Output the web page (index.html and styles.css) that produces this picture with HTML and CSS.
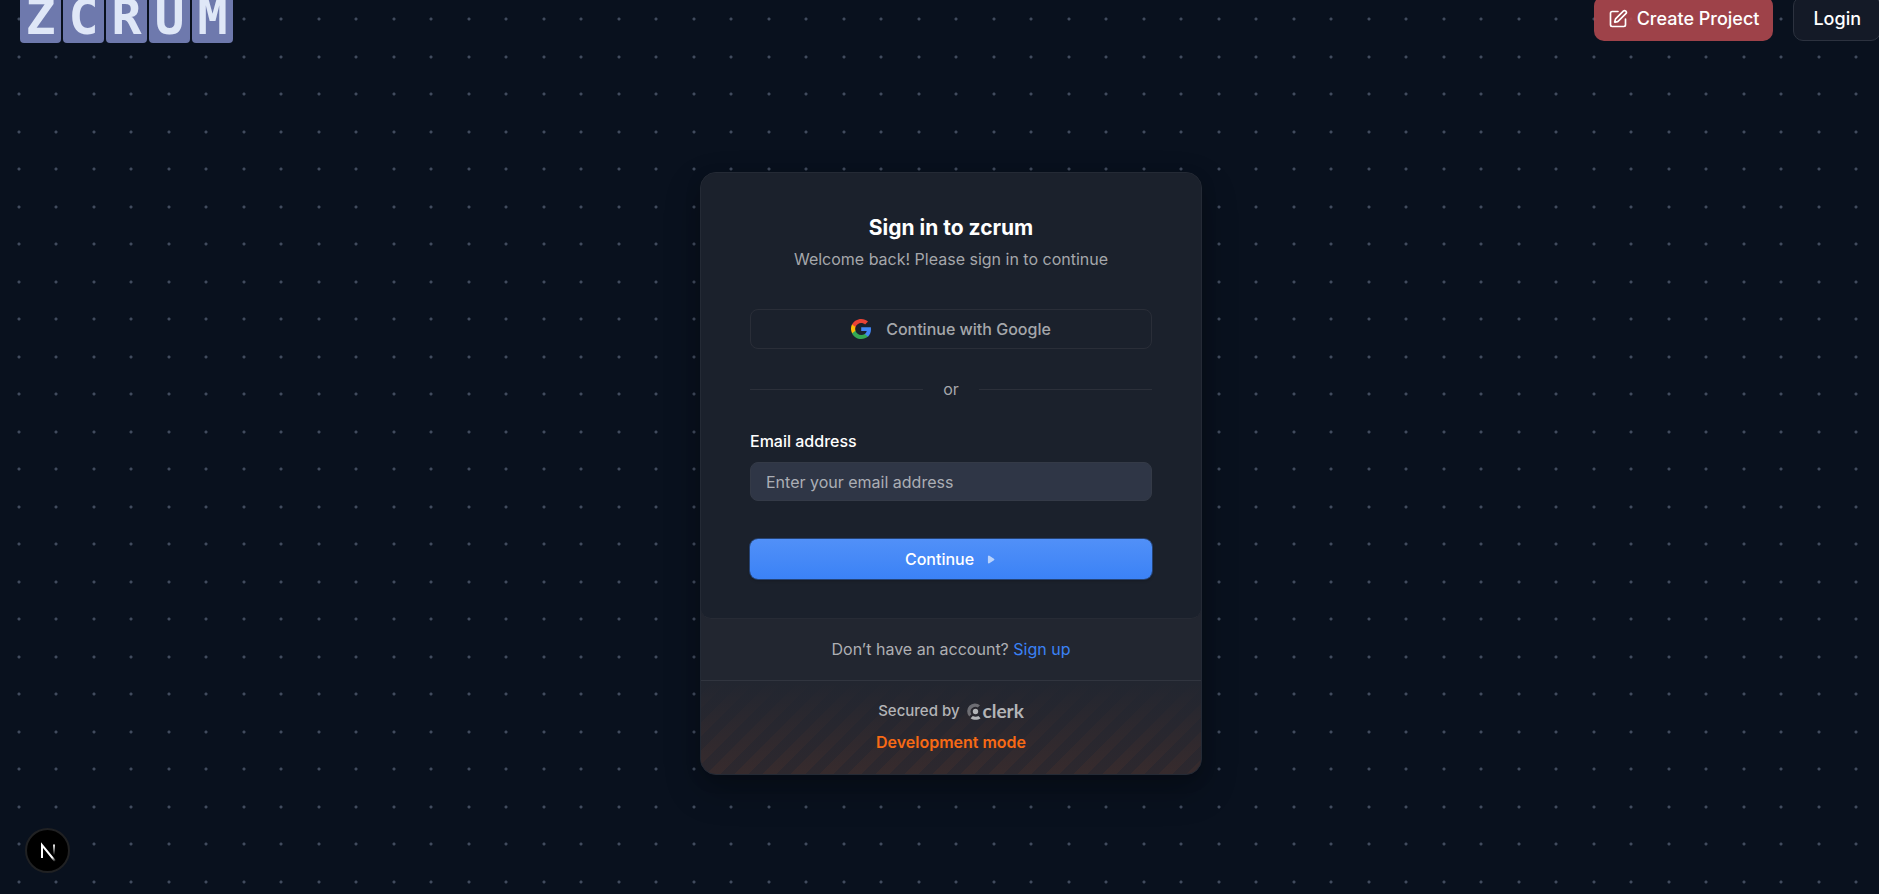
FILE: index.html
```html
<!DOCTYPE html>
<html lang="en">
<head>
<meta charset="utf-8">
<title>zcrum</title>
<link rel="stylesheet" href="styles.css">
</head>
<body>
<header class="header">
  <a class="logo" href="#" aria-label="zcrum home">
    <span class="tile">Z</span><span class="tile">C</span><span class="tile">R</span><span class="tile">U</span><span class="tile">M</span>
  </a>
  <nav class="actions">
    <button class="btn btn-create" type="button">
      <svg width="20" height="20" viewBox="0 0 24 24" fill="none" stroke="currentColor" stroke-width="2" stroke-linecap="round" stroke-linejoin="round" aria-hidden="true"><path d="M12 3H5a2 2 0 0 0-2 2v14a2 2 0 0 0 2 2h14a2 2 0 0 0 2-2v-7"/><path d="M18.375 2.625a1 1 0 0 1 3 3l-9.013 9.014a2 2 0 0 1-.853.505l-2.873.84a.5.5 0 0 1-.62-.62l.84-2.873a2 2 0 0 1 .506-.852z"/></svg>
      <span>Create Project</span>
    </button>
    <button class="btn btn-login" type="button">Login</button>
  </nav>
</header>
<main class="main">
  <section class="card">
    <div class="panel">
      <div class="heading">
        <h1 class="title">Sign in to zcrum</h1>
        <p class="subtitle">Welcome back! Please sign in to continue</p>
      </div>
      <button class="google" type="button">
        <svg width="20" height="20" viewBox="0 0 48 48" aria-hidden="true"><path fill="#4285F4" d="M48 24.500c0-1.700-.2-3.300-.4-4.900H24.500v9.300h13.200c-.6 3-2.300 5.600-4.900 7.300v6.100h7.900C45.300 38.100 48 31.900 48 24.500z"/><path fill="#34A853" d="M24.500 48c6.600 0 12.100-2.200 16.200-5.900l-7.900-6.100c-2.200 1.500-5 2.300-8.300 2.300-6.400 0-11.800-4.300-13.700-10.100H2.600v6.300C6.700 42.600 14.900 48 24.500 48z"/><path fill="#FBBC05" d="M10.800 28.200a14.400 14.400 0 0 1 0-9.200v-6.300H2.600a24 24 0 0 0 0 21.500z"/><path fill="#EA4335" d="M24.500 9.500c3.600 0 6.800 1.200 9.300 3.600l7-7C36.600 2.300 31.100 0 24.500 0 14.900 0 6.700 5.500 2.600 13l8.200 6.300c1.900-5.700 7.300-9.800 13.700-9.800z"/></svg>
        <span>Continue with Google</span>
      </button>
      <div class="divider"><span>or</span></div>
      <form class="form">
        <label class="label" for="email">Email address</label>
        <input class="input" id="email" type="email" placeholder="Enter your email address">
        <button class="continue" type="button">
          <span>Continue</span>
          <svg width="13" height="13" viewBox="0 0 10 10" aria-hidden="true"><path fill="currentColor" stroke="currentColor" stroke-width="1.500" stroke-linecap="round" stroke-linejoin="round" d="m7.250 5-3.500-2.250v4.500L7.250 5Z"/></svg>
        </button>
      </form>
    </div>
    <footer class="footer">
      <p class="signup">Don’t have an account? <a href="#">Sign up</a></p>
      <div class="secured">
        <p class="secured-row"><span>Secured by</span>
          <span class="clerk">
            <svg width="14" height="17" viewBox="0 0 14 17" aria-hidden="true"><path d="M13 2.200A7.800 7.800 0 0 0 2.200 13.400L4.400 11.200A4.700 4.700 0 0 1 10.800 4.600z" fill="currentColor" opacity=".5"/><circle cx="8.500" cy="8.500" r="2.700" fill="currentColor"/><path d="M3.600 15.200l2.200-2.200c1.700 1.100 3.900 1.100 5.600 0l2.200 2.200c-2.900 2.200-7.100 2.200-10 0z" fill="currentColor"/></svg>
            <span class="clerk-name">clerk</span>
          </span>
        </p>
        <p class="devmode">Development mode</p>
      </div>
    </footer>
  </section>
</main>
<button class="devtools" type="button" aria-label="Open Next.js dev tools">
  <svg width="40" height="40" viewBox="0 0 40 40" fill="none" aria-hidden="true"><defs><linearGradient id="diag" x1="20" y1="20" x2="28" y2="30" gradientUnits="userSpaceOnUse"><stop stop-color="#fff"/><stop offset=".6" stop-color="#fff"/><stop offset="1" stop-color="#fff" stop-opacity="0"/></linearGradient><linearGradient id="stem" x1="26" y1="13" x2="26" y2="24" gradientUnits="userSpaceOnUse"><stop stop-color="#fff"/><stop offset="1" stop-color="#fff" stop-opacity="0"/></linearGradient></defs><path d="M14 27V14L27 30" stroke="url(#diag)" stroke-width="2"/><path d="M26 13.500V24" stroke="url(#stem)" stroke-width="2"/></svg>
</button>
</body>
</html>
```
FILE: styles.css
```css
* { box-sizing: border-box; }
body {
  margin: 0;
  min-height: 100vh;
  overflow: hidden;
  font-family: Inter, "Liberation Sans", sans-serif;
  font-size: 16px;
  line-height: 22px;
  color: #fff;
  background-color: #09111e;
  background-image:
    radial-gradient(circle at 19px 19px, #414b5e 1px, transparent 2px),
    radial-gradient(circle at 56px 19px, #414b5e 1px, transparent 2px),
    radial-gradient(circle at 19px 57px, #414b5e 1px, transparent 2px),
    radial-gradient(circle at 56px 57px, #414b5e 1px, transparent 2px);
  background-size: 75px 75px;
}
h1, p { margin: 0; }
button, input { font: inherit; color: inherit; }
.header {
  display: flex;
  justify-content: space-between;
  align-items: flex-end;
  height: 43px;
  padding-left: 20px;
  margin-right: -2px;
}
.logo { display: flex; gap: 2px; text-decoration: none; }
.tile {
  display: flex;
  justify-content: center;
  width: 41px;
  height: 52px;
  border-radius: 4px;
  background: #6e79ad;
  color: #dfe7f7;
  font: bold 50px/52px "DejaVu Sans Mono", monospace;
}
.actions { display: flex; gap: 20px; padding-bottom: 2px; }
.btn {
  display: flex;
  align-items: center;
  height: 45px;
  border-radius: 10px;
  font-size: 18px;
  font-weight: 500;
}
.btn-create { gap: 9px; padding: 0 14px; border: 0; background: rgba(180, 74, 80, 0.87); }
.btn-login { padding: 0 19px; border: 1px solid #2c323f; background: rgba(22, 28, 40, 0.9); }
.main { display: flex; justify-content: center; padding: 129px 0 0 23px; }
.card {
  width: 502px;
  border: 1px solid #242a35;
  border-radius: 16px;
  background: #222630;
  overflow: hidden;
  box-shadow: 0 5px 15px rgba(0, 0, 0, 0.15), 0 15px 35px rgba(0, 0, 0, 0.25);
}
.panel {
  display: flex;
  flex-direction: column;
  padding: 41px 49px 39px;
  border-bottom: 1px solid #272b35;
  border-radius: 0 0 10px 10px;
  background: #1b212c;
}
.heading { display: flex; flex-direction: column; gap: 6px; margin-bottom: 39px; text-align: center; }
.title { font-size: 21px; line-height: 28px; font-weight: 700; }
.subtitle { color: #a5a7ab; }
.google {
  display: flex;
  justify-content: center;
  align-items: center;
  gap: 15px;
  height: 40px;
  border: 1px solid #2a2e38;
  border-radius: 8px;
  background: transparent;
  color: #a5a7ab;
  font-weight: 500;
}
.divider { display: flex; align-items: center; gap: 20px; margin: 29px 0 30px; color: #a5a7ab; }
.divider::before, .divider::after { content: ""; flex: 1; height: 1px; background: #2c303a; }
.form { display: flex; flex-direction: column; }
.label { margin-bottom: 10px; font-weight: 500; }
.input {
  height: 39px;
  margin-bottom: 38px;
  padding: 0 15px;
  border: 1px solid #343a47;
  border-radius: 8px;
  background: #2f3646;
}
.input::placeholder { color: #abaeb5; opacity: 1; }
.continue {
  display: flex;
  justify-content: center;
  align-items: center;
  gap: 10px;
  height: 40px;
  border: 0;
  border-radius: 8px;
  background: linear-gradient(#5190f8, #3b82f6);
  box-shadow: 0 0 0 1px #254375, 0 2px 3px rgba(0, 0, 0, 0.2);
  font-weight: 500;
}
.continue svg { opacity: 0.62; }
.signup { padding: 19px 0 20px; border-bottom: 1px solid #31353f; text-align: center; color: #aeafb3; }
.signup a { color: #3b82f6; text-decoration: none; }
.secured {
  display: flex;
  flex-direction: column;
  align-items: center;
  gap: 9px;
  padding: 19px 0 21px;
  background:
    linear-gradient(#222630, transparent),
    repeating-linear-gradient(-45deg, #372b2d 0 10px, #2d282e 10px 20px);
}
.secured-row { display: flex; align-items: center; gap: 7px; color: #b3b4b7; font-size: 15px; font-weight: 500; }
.clerk { display: flex; align-items: center; gap: 2px; }
.clerk-name { font-family: Lato, sans-serif; font-size: 19px; font-weight: 700; }
.devmode { color: #f76a15; font-weight: 600; }
.devtools {
  position: fixed;
  left: 25px;
  bottom: 21px;
  display: flex;
  justify-content: center;
  align-items: center;
  width: 45px;
  height: 45px;
  padding: 0;
  border: 2px solid #202123;
  border-radius: 50%;
  background: #000;
}
```
